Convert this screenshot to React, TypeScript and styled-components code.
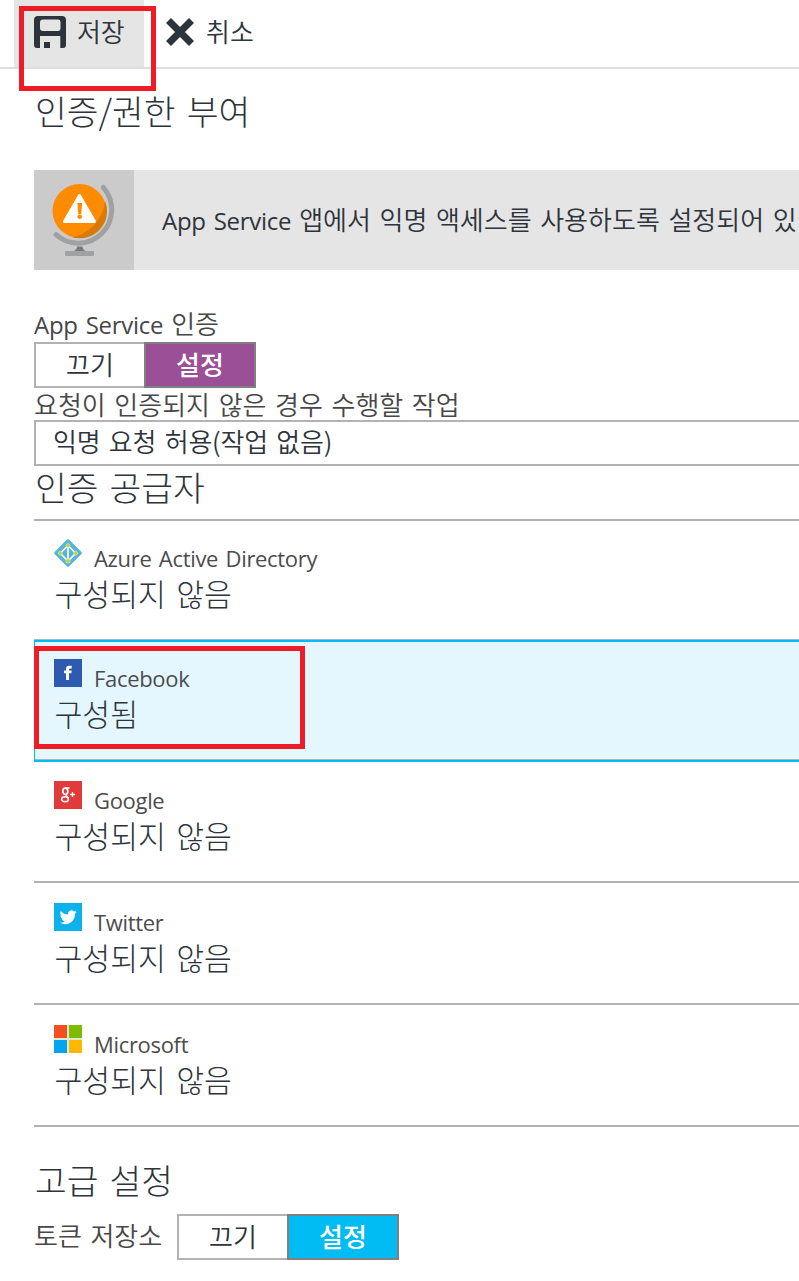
import React from "react";
import styled, { createGlobalStyle } from "styled-components";

const Global = createGlobalStyle`
  * { box-sizing: border-box; }
  html, body { margin: 0; background: #fff; overflow: hidden; }
  body {
    color: #2d343b;
    font-family: "Open Sans", "Noto Sans CJK KR", sans-serif;
    font-weight: 400;
  }
`;

const Page = styled.main`
  position: relative;
  width: 799px;
  height: 1281px;
  overflow: hidden;
  background: #fff;
`;

const Toolbar = styled.header`
  display: flex;
  height: 69px;
  padding-left: 14px;
  border-bottom: 2px solid #dedede;
`;

const Command = styled.button<{ $active?: boolean; $width: number; $indent: number; $gap: number }>`
  display: flex;
  align-items: flex-start;
  gap: ${(p) => p.$gap}px;
  width: ${(p) => p.$width}px;
  height: 67px;
  padding: 15px 0 0 ${(p) => p.$indent}px;
  border: 0;
  background: ${(p) => (p.$active ? "#e5e5e5" : "transparent")};
  color: #2d343b;
  font: inherit;
  svg { margin-top: 1px; }
`;

const Label = styled.span<{ $muted?: boolean; $tight?: boolean }>`
  display: block;
  font-size: 26px;
  line-height: 32px;
  white-space: nowrap;
  word-spacing: 2.8px;
  letter-spacing: ${(p) => (p.$tight ? "-0.2px" : "normal")};
  font-family: "Noto Sans CJK KR", sans-serif;
  font-weight: 350;
  color: ${(p) => (p.$muted ? "#474747" : "#2d343b")};
`;

const Latin = styled.span`
  font-family: "Open Sans", sans-serif;
  font-weight: 400;
  font-size: 24px;
  word-spacing: 2px;
  letter-spacing: -0.28px;
`;

const Content = styled.div`
  padding-left: 34px;
`;

const Heading = styled.h2<{ $height: number; $top: number }>`
  height: ${(p) => p.$height}px;
  margin: 0;
  padding: ${(p) => p.$top}px 0 0 1px;
  font-family: "Noto Sans CJK KR", sans-serif;
  font-size: 34.5px;
  line-height: 40px;
  font-weight: 300;
  word-spacing: 3.5px;
  white-space: nowrap;
`;

const Banner = styled.section`
  display: flex;
  height: 100px;
  margin-bottom: 37px;
  background: #e5e5e5;
  overflow: hidden;
`;

const BannerIcon = styled.div`
  flex: 0 0 100px;
  height: 100px;
  background: #cbcbcb;
`;

const BannerText = styled.div`
  padding: 33px 0 0 28px;
`;

const Field = styled.div<{ $height: number }>`
  height: ${(p) => p.$height}px;
`;

const Toggle = styled.div`
  display: flex;
  width: 222px;
  height: 46px;
`;

const Option = styled.button<{ $fill?: string }>`
  display: flex;
  justify-content: center;
  align-items: center;
  width: ${(p) => (p.$fill ? 112 : 110)}px;
  height: 46px;
  padding: 0 0 2px;
  border: 2px solid ${(p) => (p.$fill ? "#808080" : "#b2b2b2")};
  border-right-width: ${(p) => (p.$fill ? 2 : 0)}px;
  background: ${(p) => p.$fill ?? "#fff"};
  color: ${(p) => (p.$fill ? "#fff" : "#2d343b")};
  font: ${(p) => (p.$fill ? 500 : 350)} 26px/32px "Noto Sans CJK KR", sans-serif;
`;

const Select = styled.div`
  height: 46px;
  padding: 3px 0 0 17px;
  border: 2px solid #b2b2b2;
  border-right: 0;
`;

const Provider = styled.article<{ $height: number; $pad: number; $selected?: boolean; $first?: boolean }>`
  height: ${(p) => p.$height}px;
  padding: ${(p) => p.$pad}px 0 0 ${(p) => (p.$selected ? 19 : 20)}px;
  border-top: ${(p) => (p.$first ? "2px solid #b2b2b2" : "0")};
  border-bottom: ${(p) => (p.$first ? "0" : "2px solid #b2b2b2")};
  ${(p) =>
    p.$selected &&
    `
    border-top: 2px solid #00bcf2;
    border-bottom: 2px solid #00bcf2;
    border-left: 1px solid #00bcf2;
    background: #e5f7fe;
    box-shadow: inset 0 -1px 0 #b2b2b2, 0 -1px 0 #9cbcc6;
  `}
`;

const ProviderName = styled.div`
  display: flex;
  gap: 12px;
  height: 35px;
  color: #4c4c4c;
  font-family: "Open Sans", sans-serif;
  font-size: 22px;
  line-height: 32px;
  white-space: nowrap;
  word-spacing: 2px;
  letter-spacing: -0.32px;
  svg { flex: none; }
  span { padding-top: 3px; }
`;

const Status = styled.div`
  padding-left: 0.5px;
  font-family: "Noto Sans CJK KR", sans-serif;
  font-size: 30.3px;
  font-weight: 300;
  line-height: 38px;
  word-spacing: 3.5px;
  white-space: nowrap;
`;

const TokenRow = styled.div`
  display: flex;
  height: 46px;
`;

const TokenLabel = styled.div`
  width: 143px;
  padding-top: 5px;
`;

const Highlight = styled.div<{ $x: number; $y: number; $w: number; $h: number }>`
  position: absolute;
  left: ${(p) => p.$x}px;
  top: ${(p) => p.$y}px;
  width: ${(p) => p.$w}px;
  height: ${(p) => p.$h}px;
  border: 5px solid #ee1c25;
  pointer-events: none;
`;

const SaveIcon = () => (
  <svg width="32" height="32" viewBox="0 0 32 32">
    <path fill="#2d343b" fillRule="evenodd" d="M4 0H28Q32 0 32 4V29Q32 32 29 32H26.3V20H6V32H3Q0 32 0 29V4Q0 0 4 0ZM9 3.5Q6 3.5 6 6.5V12Q6 15 9 15H24Q26.5 15 26.5 12V6.5Q26.5 3.5 24 3.5Z" />
    <path fill="#2d343b" d="M10 26h6v6h-6z" />
  </svg>
);

const CancelIcon = () => (
  <svg width="28" height="32" viewBox="0 0 28 32">
    <path d="M2.5 4.500 25.500 27.500M25.500 4.500 2.500 27.500" stroke="#2d343b" strokeWidth="7" />
  </svg>
);

const GlobeIcon = () => (
  <svg width="100" height="100" viewBox="0 0 100 100">
    <path d="M69.2 17.3A33.5 33.5 0 0 1 22 64.700" fill="none" stroke="#a0a1a2" strokeWidth="5" strokeLinecap="round" />
    <path d="M43 76.500H48.500C48.500 79 50.500 81 53 81.500H38.500C41 81 43 79 43 76.500Z" fill="#7a7a7a" />
    <rect x="31" y="81" width="29" height="5" rx="1" fill="#a0a1a2" />
    <circle cx="45.5" cy="41" r="27" fill="#ff8c00" />
    <path d="M71 31A27 27 0 0 1 38 67C55 64 68 51 71 31Z" fill="#d67b0a" />
    <path d="M45.5 25.500 60.500 51.500H30.500Z" fill="#fff" stroke="#fff" strokeWidth="3" strokeLinejoin="round" />
    <path d="M43.4 33H48.100L47.300 44H44.200Z" fill="#ff8c00" />
    <circle cx="45.7" cy="46.7" r="2.3" fill="#ff8c00" />
  </svg>
);

const AzureIcon = () => (
  <svg width="28" height="28" viewBox="0 0 28 28">
    <path d="M14 2 26 14 14 26 2 14Z" fill="#59b4d9" stroke="#59b4d9" strokeWidth="3.500" strokeLinejoin="round" />
    <path d="M14 6.500V22M14 6.500 6.200 14.200 14 22 21.800 14.200Z" stroke="#fff" strokeWidth="1.6" fill="none" />
    <g fill="#b8d432" stroke="#e4f2c0" strokeWidth=".6">
      <circle cx="14" cy="6.500" r="1.900" />
      <circle cx="6.300" cy="14.200" r="1.900" />
      <circle cx="21.700" cy="14.200" r="1.900" />
      <circle cx="14" cy="21.900" r="2.200" />
    </g>
  </svg>
);

const FacebookIcon = () => (
  <svg width="28" height="28" viewBox="0 0 28 28">
    <path fill="#2e5bb0" d="M0 0h28v28H0z" />
    <path fill="#fff" d="M12 21V14.300H10V11.500H12V10Q12 6.700 15.200 6.700H17.700V9.400H16Q15 9.400 15 10.500V11.500H17.700L17.300 14.300H15V21Z" />
  </svg>
);

const GoogleIcon = () => (
  <svg width="28" height="28" viewBox="0 0 28 28">
    <path fill="#e03a3a" d="M0 0h28v28H0z" />
    <g fill="none" stroke="#fff">
      <ellipse cx="11.3" cy="10.3" rx="2.5" ry="3.2" strokeWidth="1.7" />
      <ellipse cx="11" cy="18.2" rx="3.4" ry="2.5" strokeWidth="1.5" />
      <path d="M11 7H15.500M12.500 13.200Q11 14 13 15.300L14.200 17" strokeWidth="1.3" />
      <path d="M18.500 11V16M16 13.500H21" strokeWidth="1.3" />
    </g>
  </svg>
);

const TwitterIcon = () => (
  <svg width="28" height="28" viewBox="0 0 28 28">
    <path fill="#0db2ec" d="M0 0h28v28H0z" />
    <path transform="translate(5.7 5.7) scale(.71)" fill="#fff" d="M23.950 4.570a10 10 0 0 1-2.820.77 4.960 4.960 0 0 0 2.160-2.720 9.900 9.900 0 0 1-3.120 1.190 4.920 4.920 0 0 0-8.380 4.480A13.930 13.930 0 0 1 1.640 3.160a4.920 4.920 0 0 0 1.520 6.570 4.900 4.900 0 0 1-2.230-.61v.06a4.920 4.920 0 0 0 3.950 4.830 5 5 0 0 1-2.210.08 4.940 4.940 0 0 0 4.600 3.420A9.870 9.870 0 0 1 0 19.540a13.940 13.940 0 0 0 7.550 2.210c9.050 0 14-7.500 14-13.980 0-.21 0-.42-.02-.63a9.940 9.940 0 0 0 2.420-2.570z" />
  </svg>
);

const MicrosoftIcon = () => (
  <svg width="28" height="28" viewBox="0 0 28 28">
    <path fill="#dfe8d0" d="M0 0h28v28H0z" />
    <path fill="#f35022" d="M0 0h13v13H0z" />
    <path fill="#80bb03" d="M15 0h13v13H15z" />
    <path fill="#03a5f0" d="M0 15h13v13H0z" />
    <path fill="#ffb903" d="M15 15h13v13H15z" />
  </svg>
);

const providers = [
  { name: "Azure Active Directory", status: "구성되지 않음", icon: <AzureIcon />, height: 121, pad: 18, first: true },
  { name: "Facebook", status: "구성됨", icon: <FacebookIcon />, height: 122, pad: 17, selected: true },
  { name: "Google", status: "구성되지 않음", icon: <GoogleIcon />, height: 121, pad: 19 },
  { name: "Twitter", status: "구성되지 않음", icon: <TwitterIcon />, height: 122, pad: 20 },
  { name: "Microsoft", status: "구성되지 않음", icon: <MicrosoftIcon />, height: 122, pad: 20 },
];

export default function App() {
  return (
    <Page>
      <Global />
      <Toolbar>
        <Command $active $width={130} $indent={20} $gap={11}><SaveIcon /><Label $tight>저장</Label></Command>
        <Command $width={130} $indent={22} $gap={12}><CancelIcon /><Label>취소</Label></Command>
      </Toolbar>
      <Content>
        <Heading $height={101} $top={21}>인증/권한 부여</Heading>
        <Banner>
          <BannerIcon><GlobeIcon /></BannerIcon>
          <BannerText><Label><Latin>App Service </Latin>앱에서 익명 액세스를 사용하도록 설정되어 있</Label></BannerText>
        </Banner>
        <Field $height={35}><Label $muted><Latin>App Service </Latin>인증</Label></Field>
        <Toggle><Option>끄기</Option><Option $fill="#9b4f96">설정</Option></Toggle>
        <Field $height={32}><Label $muted>요청이 인증되지 않은 경우 수행할 작업</Label></Field>
        <Select><Label $tight>익명 요청 허용(작업 없음)</Label></Select>
        <Heading $height={53} $top={0}>인증 공급자</Heading>
        {providers.map((p) => (
          <Provider key={p.name} $height={p.height} $pad={p.pad} $selected={p.selected} $first={p.first}>
            <ProviderName>{p.icon}<span>{p.name}</span></ProviderName>
            <Status>{p.status}</Status>
          </Provider>
        ))}
        <Heading $height={87} $top={32}>고급 설정</Heading>
        <TokenRow>
          <TokenLabel><Label $muted>토큰 저장소</Label></TokenLabel>
          <Toggle><Option>끄기</Option><Option $fill="#00bcf2">설정</Option></Toggle>
        </TokenRow>
      </Content>
      <Highlight $x={19} $y={6} $w={137} $h={85} />
      <Highlight $x={34} $y={646} $w={271} $h={103} />
    </Page>
  );
}
